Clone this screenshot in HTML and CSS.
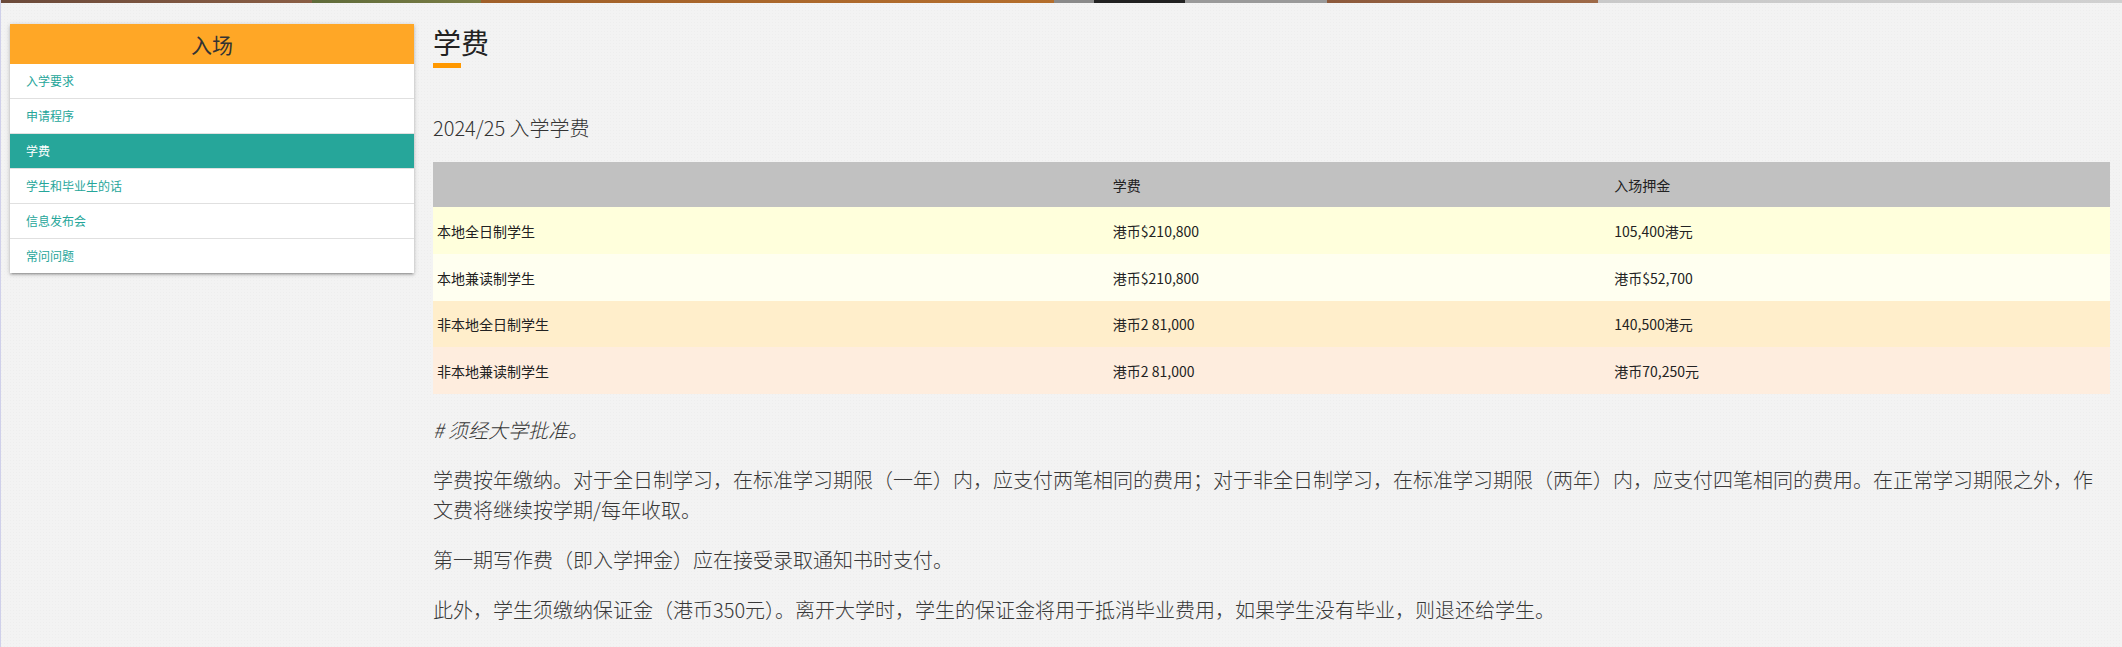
FILE: index.html
```html
<!DOCTYPE html>
<html lang="zh-CN">
<head>
<meta charset="utf-8">
<title>学费</title>
<link rel="stylesheet" href="styles.css">
</head>
<body>
<div class="topstrip"></div>
<div class="page">
  <aside class="sidenav">
    <div class="sidenav-head">入场</div>
    <ul class="sidenav-list">
      <li class="sidenav-item">入学要求</li>
      <li class="sidenav-item">申请程序</li>
      <li class="sidenav-item active">学费</li>
      <li class="sidenav-item">学生和毕业生的话</li>
      <li class="sidenav-item">信息发布会</li>
      <li class="sidenav-item">常问问题</li>
    </ul>
  </aside>
  <main class="content">
    <h1 class="title">学费</h1>
    <div class="title-bar"></div>
    <h2 class="subtitle">2024/25 入学学费</h2>
    <table class="fees">
      <thead>
        <tr class="head"><th></th><th>学费</th><th>入场押金</th></tr>
      </thead>
      <tbody>
        <tr class="r1"><td>本地全日制学生</td><td>港币$210,800</td><td>105,400港元</td></tr>
        <tr class="r2"><td>本地兼读制学生</td><td>港币$210,800</td><td>港币$52,700</td></tr>
        <tr class="r3"><td>非本地全日制学生</td><td>港币2 81,000</td><td>140,500港元</td></tr>
        <tr class="r4"><td>非本地兼读制学生</td><td>港币2 81,000</td><td>港币70,250元</td></tr>
      </tbody>
    </table>
    <p class="note"># 须经大学批准。</p>
    <p class="text">学费按年缴纳。对于全日制学习，在标准学习期限（一年）内，应支付两笔相同的费用；对于非全日制学习，在标准学习期限（两年）内，应支付四笔相同的费用。在正常学习期限之外，作文费将继续按学期/每年收取。</p>
    <p class="text">第一期写作费（即入学押金）应在接受录取通知书时支付。</p>
    <p class="text">此外，学生须缴纳保证金（港币350元）。离开大学时，学生的保证金将用于抵消毕业费用，如果学生没有毕业，则退还给学生。</p>
  </main>
</div>
</body>
</html>
```

FILE: styles.css
```css
* { box-sizing: border-box; }

html, body {
  margin: 0;
  padding: 0;
}

body {
  background-color: #f3f3f3;
  background-image: radial-gradient(rgba(0,0,0,0.02) 1px, transparent 1px);
  background-size: 3px 3px;
  font-family: "Noto Sans CJK SC", "Noto Sans", sans-serif;
  color: #333;
  border-left: 1px solid #cfd0ea;
  min-height: 647px;
}

.topstrip {
  height: 3px;
  margin-bottom: 1px;
  background: linear-gradient(to right,
    #6b4a3a 0, #8a5e45 311px,
    #5f6b3a 311px, #7a7d45 480px,
    #a0602a 480px, #b46e2c 1053px,
    #8a8a8a 1053px, #8a8a8a 1093px,
    #222 1093px, #222 1184px,
    #9a9a9a 1184px, #9a9a9a 1326px,
    #8d5a3c 1326px, #9e6a48 1597px,
    #c9c9c9 1597px, #d0d0d0 100%);
}

.page {
  display: flex;
  align-items: flex-start;
  padding: 20px 12px 0 9px;
}

.sidenav {
  flex: 0 0 404px;
  background: #fff;
  box-shadow: 0 2px 2px 0 rgba(0,0,0,0.14), 0 3px 1px -2px rgba(0,0,0,0.12), 0 1px 5px 0 rgba(0,0,0,0.2);
}

.sidenav-head {
  height: 40px;
  background: #ffa726;
  color: #333;
  font-size: 21px;
  line-height: 40px;
  text-align: center;
}

.sidenav-list {
  list-style: none;
  margin: 0;
  padding: 0;
}

.sidenav-item {
  height: 35px;
  line-height: 34px;
  padding-left: 16px;
  font-size: 12px;
  color: #26a69a;
  border-bottom: 1px solid #e0e0e0;
  background: #fff;
}

.sidenav-item:last-child {
  border-bottom: none;
  height: 34px;
}

.sidenav-item.active {
  background: #26a69a;
  color: #fff;
}

.content {
  flex: 1;
  margin-left: 19px;
  min-width: 0;
}

.title {
  margin: 1px 0 0;
  font-size: 28px;
  font-weight: 400;
  line-height: 34px;
  color: #222;
}

.title-bar {
  width: 28px;
  height: 5px;
  background: #ff9800;
  margin-top: 4px;
}

.subtitle {
  margin: 45px 0 0;
  font-size: 20px;
  font-weight: 300;
  line-height: 30px;
  color: #333;
}

.fees {
  width: 100%;
  margin-top: 19px;
  border-collapse: collapse;
  font-size: 14px;
  color: #222;
}

.fees th,
.fees td {
  text-align: left;
  font-weight: 400;
  padding: 0 4px;
  line-height: 20px;
}

.fees th:nth-child(1), .fees td:nth-child(1) { width: 40.3%; }
.fees th:nth-child(2), .fees td:nth-child(2) { width: 29.9%; }

.fees .head { background: #c1c1c1; height: 45px; }
.fees .r1 { background: #ffffdc; height: 47px; }
.fees .r2 { background: #fffff0; height: 47px; }
.fees .r3 { background: #ffeecb; height: 46px; }
.fees .r4 { background: #feedde; height: 47px; }

.note,
.text {
  margin: 20px 0 0;
  font-size: 20px;
  line-height: 30px;
  font-weight: 300;
  color: #383838;
}

.note {
  margin-top: 21px;
  font-style: italic;
}
```
